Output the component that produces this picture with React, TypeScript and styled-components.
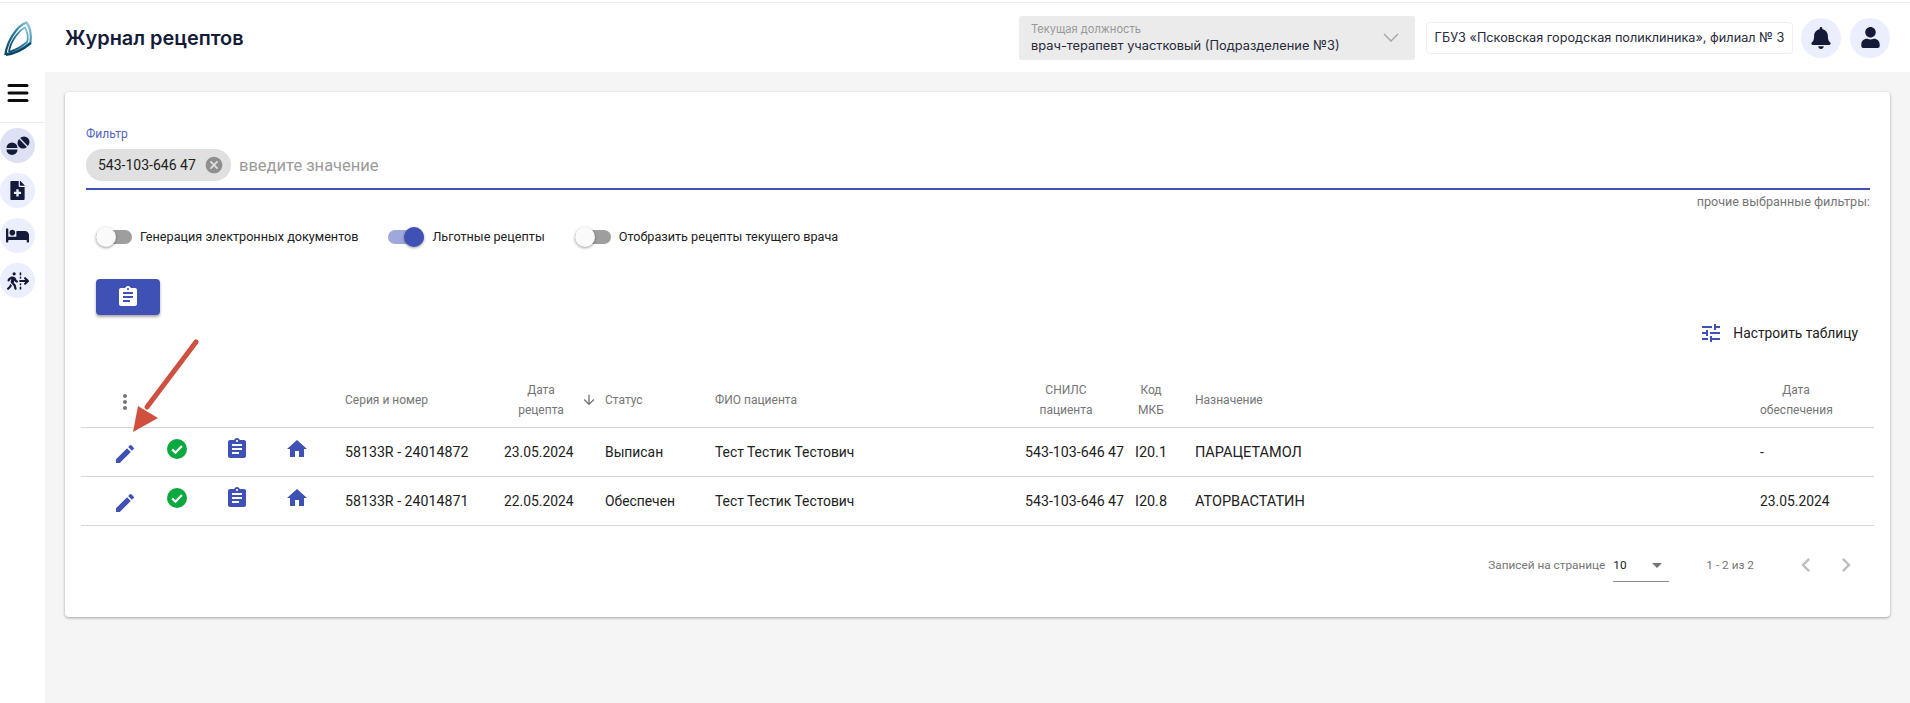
import styled, { createGlobalStyle } from 'styled-components';
import {
  MdArrowDownward,
  MdArrowDropDown,
  MdAssignment,
  MdCancel,
  MdChevronLeft,
  MdChevronRight,
  MdEdit,
  MdHome,
  MdMoreVert,
  MdTune,
} from 'react-icons/md';
import { FaBed, FaBell, FaFileMedical, FaUser } from 'react-icons/fa';
import { FaPersonWalkingDashedLineArrowRight } from 'react-icons/fa6';

const BLUE = '#3f51b5';
const NAVY = '#141a38';
const COLUMNS = '66px 60px 60px 60px 177px 101px 110px 310px 110px 60px 565px 114px';

const GlobalStyle = createGlobalStyle`
  html, body {
    margin: 0;
    padding: 0;
    background: #fff;
  }
  body {
    font-family: Roboto, "Liberation Sans", sans-serif;
    color: #212121;
  }
  * {
    box-sizing: border-box;
  }
`;

const Page = styled.div`
  height: 703px;
  overflow: hidden;
  position: relative;
  display: flex;
  flex-direction: column;
`;

const TopBar = styled.header`
  margin-top: 2px;
  height: 70px;
  border-top: 1px solid #ededed;
  display: flex;
  align-items: center;
  padding-right: 20px;
`;

const LogoCell = styled.div`
  width: 45px;
  display: flex;
  padding: 2px 0 0 4px;
  flex-shrink: 0;
`;

const Title = styled.h1`
  margin: 0 0 0 20px;
  font: 600 19.9px/24px Inter, "Noto Sans", sans-serif;
  color: ${NAVY};
  flex: 1;
`;

const PositionSelect = styled.div`
  width: 396px;
  height: 44px;
  background: #ebebeb;
  border-radius: 3px;
  padding: 6px 16px 6px 12px;
  display: flex;
  align-items: center;
  justify-content: space-between;
  font-family: Inter, "Noto Sans", sans-serif;
`;

const PositionLabel = styled.div`
  font-size: 11.1px;
  line-height: 16px;
  color: #989898;
`;

const PositionValue = styled.div`
  font-size: 12.85px;
  line-height: 17px;
  color: #262a3a;
`;

const OrgBox = styled.div`
  width: 367px;
  height: 32px;
  margin-left: 11px;
  border: 1px solid #eeeeee;
  border-radius: 4px;
  display: flex;
  align-items: center;
  justify-content: center;
  white-space: nowrap;
  font: 12.7px Inter, "Noto Sans", sans-serif;
  color: #262a3a;
`;

const RoundButton = styled.div<{ $active?: boolean; $size?: number }>`
  width: ${({ $size }) => $size ?? 40}px;
  height: ${({ $size }) => $size ?? 40}px;
  border-radius: 50%;
  flex-shrink: 0;
  background: ${({ $active }) => ($active ? '#dde1f3' : '#ebeefc')};
  color: ${NAVY};
  display: flex;
  align-items: center;
  justify-content: center;
`;

const TopActions = styled.div`
  display: flex;
  gap: 9px;
  margin-left: 8px;
`;

const Body = styled.div`
  flex: 1;
  display: flex;
  min-height: 0;
`;

const Sidebar = styled.aside`
  width: 45px;
  flex-shrink: 0;
  display: flex;
  flex-direction: column;
`;

const MenuCell = styled.div`
  height: 51px;
  padding: 11px 0 0 7px;
  border-bottom: 1px solid #ebebeb;
`;

const SideList = styled.nav`
  display: flex;
  flex-direction: column;
  gap: 10px;
  padding-top: 5px;
`;

const Main = styled.main`
  flex: 1;
  background: #f5f5f5;
  padding: 20px 20px 0;
`;

const Card = styled.section`
  height: 525px;
  background: #fff;
  border-radius: 4px;
  box-shadow: 0 1px 3px rgba(0, 0, 0, 0.35);
  padding: 34px 20px 0 21px;
`;

const FieldLabel = styled.div`
  font-size: 12px;
  line-height: 16px;
  color: #5563c1;
`;

const FilterInput = styled.div`
  margin-top: 7px;
  padding-bottom: 7px;
  border-bottom: 2px solid ${BLUE};
  display: flex;
  align-items: center;
  gap: 8px;
`;

const Chip = styled.div`
  height: 32px;
  width: 145px;
  border-radius: 16px;
  background: #e0e0e0;
  padding: 0 7px 0 12px;
  display: flex;
  align-items: center;
  justify-content: space-between;
  font-size: 14px;
  color: #212121;
  white-space: nowrap;
`;

const Placeholder = styled.span`
  font-size: 16.5px;
  color: #9b9b9b;
`;

const OtherFilters = styled.div`
  margin-top: 5px;
  text-align: right;
  font-size: 12.6px;
  line-height: 14px;
  color: #757575;
`;

const SwitchRow = styled.div`
  margin: 18px 0 0 10px;
  display: flex;
  gap: 30px;
`;

const SwitchItem = styled.label`
  display: flex;
  align-items: center;
  gap: 8px;
  font-size: 12.65px;
  line-height: 20px;
  color: #212121;
`;

const Track = styled.span<{ $on?: boolean }>`
  position: relative;
  display: block;
  width: 36px;
  height: 14px;
  margin: 3px 0;
  border-radius: 7px;
  background: ${({ $on }) => ($on ? '#9fa8da' : '#9e9e9e')};
`;

const Thumb = styled.span<{ $on?: boolean }>`
  position: absolute;
  top: -3px;
  left: ${({ $on }) => ($on ? '16px' : '0')};
  width: 20px;
  height: 20px;
  border-radius: 50%;
  background: ${({ $on }) => ($on ? BLUE : '#fafafa')};
  box-shadow: 0 1px 3px rgba(0, 0, 0, 0.4);
`;

const PrimaryButton = styled.button`
  display: flex;
  align-items: center;
  justify-content: center;
  width: 64px;
  height: 36px;
  margin: 32px 0 0 10px;
  border: 0;
  padding: 0;
  border-radius: 4px;
  background: ${BLUE};
  color: #fff;
  box-shadow: 0 2px 3px rgba(0, 0, 0, 0.35);
`;

const ToolRow = styled.div`
  margin-top: 6px;
  height: 24px;
  display: flex;
  align-items: center;
  justify-content: flex-end;
  gap: 10px;
  padding-right: 12px;
  font-size: 13.8px;
  color: #212121;
`;

const Table = styled.div`
  margin: 31px -4px 0 -5px;
`;

const HeadRow = styled.div`
  height: 52px;
  padding-bottom: 3px;
  display: grid;
  grid-template-columns: ${COLUMNS};
  align-items: center;
  border-bottom: 1px solid #d6d6d6;
  font-size: 12px;
  line-height: 20px;
  color: #757575;
`;

const Row = styled.div`
  height: 49px;
  display: grid;
  grid-template-columns: ${COLUMNS};
  align-items: center;
  border-bottom: 1px solid #d6d6d6;
  font-size: 13.85px;
  color: #212121;
`;

const Cell = styled.div<{ $size?: number }>`
  font-size: ${({ $size }) => ($size ? `${$size}px` : 'inherit')};
`;

const IconCell = styled.div`
  display: flex;
  justify-content: center;
  padding-bottom: 6px;
  color: ${BLUE};
`;

const PencilCell = styled.div<{ $muted?: boolean }>`
  display: flex;
  justify-content: center;
  padding: 4px 0 0 22px;
  color: ${({ $muted }) => ($muted ? '#757575' : BLUE)};
`;

const SerialCell = styled(Cell)`
  padding-left: 18px;
`;

const SortHead = styled.div`
  display: flex;
  align-items: center;
  gap: 3px;
`;

const StackedHead = styled.div<{ $width: number }>`
  width: ${({ $width }) => $width}px;
  text-align: center;
`;

const Pagination = styled.div`
  margin: 19px 10px 0 0;
  height: 40px;
  display: flex;
  align-items: center;
  justify-content: flex-end;
  font-size: 11.8px;
  color: #757575;
`;

const PerPage = styled.div`
  width: 56px;
  height: 29px;
  margin: 5px 0 0 8px;
  padding-bottom: 5px;
  border-bottom: 1px solid #8a8a8a;
  display: flex;
  align-items: center;
  justify-content: space-between;
  color: #212121;
`;

const RangeText = styled.span`
  margin: 0 38px 0 37px;
`;

const PageArrows = styled.div`
  display: flex;
  gap: 12px;
  color: #bdbdbd;
`;

const ArrowOverlay = styled.svg`
  position: absolute;
  left: 125px;
  top: 335px;
  pointer-events: none;
`;

const Logo = () => (
  <svg width="29" height="36" viewBox="0 0 29 36" fill="none">
    <defs>
      <linearGradient id="logoStroke" x1="0" y1="1" x2="1" y2="0">
        <stop offset="0" stopColor="#0b4566" />
        <stop offset="0.6" stopColor="#2a7fa3" />
        <stop offset="1" stopColor="#9bd2e6" />
      </linearGradient>
    </defs>
    <path
      d="M1.5 33 C3 22 12 5 22.5 1.5 C26.5 6 27.5 15 26.5 21.5 C20 27 10 32.5 1.5 33 Z"
      stroke="url(#logoStroke)"
      strokeWidth="2.2"
    />
    <path
      d="M5 31 C6 22 13 11 21 6.5 C24 12 24.5 17 23 21 C18 25.5 12 29 5 31"
      stroke="url(#logoStroke)"
      strokeWidth="1.8"
    />
    <path d="M2 33.8 C11 33 20 28 27 22" stroke="#0b4566" strokeWidth="2.2" />
  </svg>
);

const MenuBars = () => (
  <svg width="22" height="20" viewBox="0 0 22 20" fill="#0b0b0b">
    <rect x="0.5" y="1" width="21" height="3" rx="1.5" />
    <rect x="0.5" y="8.5" width="21" height="3" rx="1.5" />
    <rect x="0.5" y="16" width="21" height="3" rx="1.5" />
  </svg>
);

const PillsIcon = () => (
  <svg width="24" height="20" viewBox="0 0 24 20" fill={NAVY}>
    <path d="M0.5 12 a5.5 5.5 0 0 1 11 0 Z" />
    <path d="M0.5 13.4 h11 a5.5 5.5 0 0 1 -11 0 Z" />
    <g transform="rotate(45 17.5 6.5)">
      <path d="M12 5.8 a5.5 5.5 0 0 1 11 0 Z" />
      <path d="M12 7.2 h11 a5.5 5.5 0 0 1 -11 0 Z" />
    </g>
  </svg>
);

const SelectChevron = () => (
  <svg width="16" height="9" viewBox="0 0 16 9" fill="none">
    <path d="M1 1 L8 8 L15 1" stroke="#a3a3a3" strokeWidth="1.3" />
  </svg>
);

const CheckBadge = () => (
  <svg width="20" height="20" viewBox="0 0 20 20">
    <circle cx="10" cy="10" r="10" fill="#0aa83f" />
    <path d="M5.2 10.4 l3.3 3.3 l6.4 -6.6" fill="none" stroke="#fff" strokeWidth="2.2" />
  </svg>
);

const Arrow = () => (
  <ArrowOverlay width="80" height="105" viewBox="0 0 80 105">
    <path d="M71 7 L22 72" stroke="#d05040" strokeWidth="5" strokeLinecap="round" />
    <path d="M8 97 L13 71 L33 83 Z" fill="#d05040" />
  </ArrowOverlay>
);

type Recipe = {
  serial: string;
  date: string;
  status: string;
  mkb: string;
  drug: string;
  issued: string;
};

const recipes: Recipe[] = [
  { serial: '58133R - 24014872', date: '23.05.2024', status: 'Выписан', mkb: 'I20.1', drug: 'ПАРАЦЕТАМОЛ', issued: '-' },
  { serial: '58133R - 24014871', date: '22.05.2024', status: 'Обеспечен', mkb: 'I20.8', drug: 'АТОРВАСТАТИН', issued: '23.05.2024' },
];

const switches = [
  { label: 'Генерация электронных документов', on: false },
  { label: 'Льготные рецепты', on: true },
  { label: 'Отобразить рецепты текущего врача', on: false },
];

export default function App() {
  return (
    <Page>
      <GlobalStyle />
      <TopBar>
        <LogoCell>
          <Logo />
        </LogoCell>
        <Title>Журнал рецептов</Title>
        <PositionSelect>
          <div>
            <PositionLabel>Текущая должность</PositionLabel>
            <PositionValue>врач-терапевт участковый (Подразделение №3)</PositionValue>
          </div>
          <SelectChevron />
        </PositionSelect>
        <OrgBox>ГБУЗ «Псковская городская поликлиника», филиал № 3</OrgBox>
        <TopActions>
          <RoundButton>
            <FaBell size={22} />
          </RoundButton>
          <RoundButton>
            <FaUser size={21} />
          </RoundButton>
        </TopActions>
      </TopBar>
      <Body>
        <Sidebar>
          <MenuCell>
            <MenuBars />
          </MenuCell>
          <SideList>
            <RoundButton $active $size={35}>
              <PillsIcon />
            </RoundButton>
            <RoundButton $size={35}>
              <FaFileMedical size={19} />
            </RoundButton>
            <RoundButton $size={35}>
              <FaBed size={23} />
            </RoundButton>
            <RoundButton $size={35}>
              <FaPersonWalkingDashedLineArrowRight size={22} />
            </RoundButton>
          </SideList>
        </Sidebar>
        <Main>
          <Card>
            <FieldLabel>Фильтр</FieldLabel>
            <FilterInput>
              <Chip>
                543-103-646 47
                <MdCancel size={20} color="#8f8f8f" />
              </Chip>
              <Placeholder>введите значение</Placeholder>
            </FilterInput>
            <OtherFilters>прочие выбранные фильтры:</OtherFilters>
            <SwitchRow>
              {switches.map((item) => (
                <SwitchItem key={item.label}>
                  <Track $on={item.on}>
                    <Thumb $on={item.on} />
                  </Track>
                  {item.label}
                </SwitchItem>
              ))}
            </SwitchRow>
            <PrimaryButton>
              <MdAssignment size={24} />
            </PrimaryButton>
            <ToolRow>
              <MdTune size={24} color={BLUE} />
              Настроить таблицу
            </ToolRow>
            <Table>
              <HeadRow>
                <PencilCell $muted>
                  <MdMoreVert size={24} />
                </PencilCell>
                <div />
                <div />
                <div />
                <SerialCell>Серия и номер</SerialCell>
                <SortHead>
                  <StackedHead $width={74}>
                    Дата
                    <br />
                    рецепта
                  </StackedHead>
                  <MdArrowDownward size={16} />
                </SortHead>
                <div>Статус</div>
                <div>ФИО пациента</div>
                <StackedHead $width={82}>
                  СНИЛС
                  <br />
                  пациента
                </StackedHead>
                <StackedHead $width={32}>
                  Код
                  <br />
                  МКБ
                </StackedHead>
                <div>Назначение</div>
                <StackedHead $width={72}>
                  Дата
                  <br />
                  обеспечения
                </StackedHead>
              </HeadRow>
              {recipes.map((recipe) => (
                <Row key={recipe.serial}>
                  <PencilCell>
                    <MdEdit size={24} />
                  </PencilCell>
                  <IconCell>
                    <CheckBadge />
                  </IconCell>
                  <IconCell>
                    <MdAssignment size={24} />
                  </IconCell>
                  <IconCell>
                    <MdHome size={24} />
                  </IconCell>
                  <SerialCell $size={14.2}>{recipe.serial}</SerialCell>
                  <Cell>{recipe.date}</Cell>
                  <Cell>{recipe.status}</Cell>
                  <Cell>Тест Тестик Тестович</Cell>
                  <Cell $size={14.2}>543-103-646 47</Cell>
                  <Cell $size={14.4}>{recipe.mkb}</Cell>
                  <Cell $size={14.5}>{recipe.drug}</Cell>
                  <Cell>{recipe.issued}</Cell>
                </Row>
              ))}
            </Table>
            <Pagination>
              Записей на странице
              <PerPage>
                10
                <MdArrowDropDown size={24} color="#757575" />
              </PerPage>
              <RangeText>1 - 2 из 2</RangeText>
              <PageArrows>
                <MdChevronLeft size={28} />
                <MdChevronRight size={28} />
              </PageArrows>
            </Pagination>
          </Card>
        </Main>
      </Body>
      <Arrow />
    </Page>
  );
}
